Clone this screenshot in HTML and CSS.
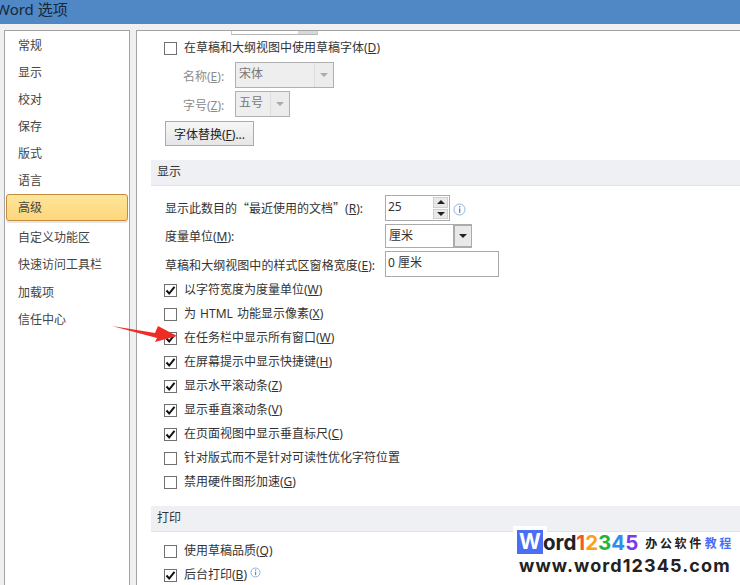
FILE: index.html
```html
<!DOCTYPE html>
<html lang="zh-CN">
<head>
<meta charset="utf-8">
<title>Word 选项</title>
<link rel="stylesheet" href="styles.css">
</head>
<body>
<div class="window">
  <header class="titlebar"><span class="title">Word 选项</span></header>
  <div class="main">
    <nav class="nav">
      <div class="nav-item">常规</div>
      <div class="nav-item">显示</div>
      <div class="nav-item">校对</div>
      <div class="nav-item">保存</div>
      <div class="nav-item">版式</div>
      <div class="nav-item">语言</div>
      <div class="nav-item selected">高级</div>
      <div class="nav-item">自定义功能区</div>
      <div class="nav-item gap-after">快速访问工具栏</div>
      <div class="nav-item">加载项</div>
      <div class="nav-item">信任中心</div>
    </nav>
    <section class="panel">
      <div class="clipped"><span class="clipped-btn"></span></div>
      <label class="check first"><span class="box"></span><span>在草稿和大纲视图中使用草稿字体(<u>D</u>)</span></label>
      <div class="font-row name-row">
        <span class="dim-label">名称(<u>E</u>):</span>
        <span class="combo disabled w-name"><span class="combo-text">宋体</span><span class="combo-btn"><i class="tri"></i></span></span>
      </div>
      <div class="font-row size-row">
        <span class="dim-label">字号(<u>Z</u>):</span>
        <span class="combo disabled w-size"><span class="combo-text">五号</span><span class="combo-btn"><i class="tri"></i></span></span>
      </div>
      <button class="button">字体替换(<u>F</u>)...</button>

      <h2 class="section display">显示</h2>
      <div class="form-row r-recent">
        <span class="form-label">显示此数目的<span class="quote">“</span>最近使用的文档<span class="quote">”</span>(<u>R</u>):</span>
        <span class="spin"><span class="spin-text">25</span><span class="spin-btns"><span class="spin-btn"><i class="tri up"></i></span><span class="spin-btn"><i class="tri"></i></span></span></span>
        <svg class="info" width="13" height="13" viewBox="0 0 13 13"><circle cx="6.5" cy="6.5" r="5.5" fill="#fff" stroke="#8fb4dc"/><rect x="6" y="3" width="1.4" height="1.4" fill="#5b8fc9"/><rect x="6" y="5.4" width="1.4" height="4.4" fill="#5b8fc9"/></svg>
      </div>
      <div class="form-row r-unit">
        <span class="form-label">度量单位(<u>M</u>):</span>
        <span class="combo active w-unit"><span class="combo-text">厘米</span><span class="combo-btn"><i class="tri"></i></span></span>
      </div>
      <div class="form-row r-width">
        <span class="form-label">草稿和大纲视图中的样式区窗格宽度(<u>E</u>):</span>
        <span class="textbox">0 厘米</span>
      </div>
      <div class="checks">
        <label class="check"><span class="box on"><svg width="11" height="11" viewBox="0 0 11 11"><path d="M1.5 5.5 4.2 8.5 9.5 1.8" fill="none" stroke="#111" stroke-width="2"/></svg></span><span>以字符宽度为度量单位(<u>W</u>)</span></label>
        <label class="check"><span class="box"></span><span class="wide">为 HTML 功能显示像素(<u>X</u>)</span></label>
        <label class="check"><span class="box on"><svg width="11" height="11" viewBox="0 0 11 11"><path d="M1.5 5.5 4.2 8.5 9.5 1.8" fill="none" stroke="#111" stroke-width="2"/></svg></span><span>在任务栏中显示所有窗口(<u>W</u>)</span></label>
        <label class="check"><span class="box on"><svg width="11" height="11" viewBox="0 0 11 11"><path d="M1.5 5.5 4.2 8.5 9.5 1.8" fill="none" stroke="#111" stroke-width="2"/></svg></span><span>在屏幕提示中显示快捷键(<u>H</u>)</span></label>
        <label class="check"><span class="box on"><svg width="11" height="11" viewBox="0 0 11 11"><path d="M1.5 5.5 4.2 8.5 9.5 1.8" fill="none" stroke="#111" stroke-width="2"/></svg></span><span>显示水平滚动条(<u>Z</u>)</span></label>
        <label class="check"><span class="box on"><svg width="11" height="11" viewBox="0 0 11 11"><path d="M1.5 5.5 4.2 8.5 9.5 1.8" fill="none" stroke="#111" stroke-width="2"/></svg></span><span>显示垂直滚动条(<u>V</u>)</span></label>
        <label class="check"><span class="box on"><svg width="11" height="11" viewBox="0 0 11 11"><path d="M1.5 5.5 4.2 8.5 9.5 1.8" fill="none" stroke="#111" stroke-width="2"/></svg></span><span>在页面视图中显示垂直标尺(<u>C</u>)</span></label>
        <label class="check"><span class="box"></span><span>针对版式而不是针对可读性优化字符位置</span></label>
        <label class="check"><span class="box"></span><span>禁用硬件图形加速(<u>G</u>)</span></label>
      </div>

      <h2 class="section print">打印</h2>
      <div class="checks print-checks">
        <label class="check"><span class="box"></span><span>使用草稿品质(<u>Q</u>)</span></label>
        <label class="check"><span class="box on"><svg width="11" height="11" viewBox="0 0 11 11"><path d="M1.5 5.5 4.2 8.5 9.5 1.8" fill="none" stroke="#111" stroke-width="2"/></svg></span><span>后台打印(<u>B</u>)</span><svg class="info small" width="11" height="11" viewBox="0 0 11 11"><circle cx="5.5" cy="5.5" r="4.5" fill="#fff" stroke="#8fb4dc"/><rect x="5" y="2.5" width="1.2" height="1.2" fill="#5b8fc9"/><rect x="5" y="4.6" width="1.2" height="3.6" fill="#5b8fc9"/></svg></label>
      </div>
    </section>
  </div>
</div>
<svg class="arrow" width="70" height="20" viewBox="0 0 70 20"><polygon points="1,0 44,7 47,0 66,10 44,16 46,12" fill="#ee2c24"/></svg>
<div class="watermark">
  <div class="wm-top"><span class="wm-w">W</span><span class="wm-ord">ord</span><span class="c1">1</span><span class="c2">2</span><span class="c3">3</span><span class="c4">4</span><span class="c5">5</span><span class="wm-cn">办公软件<span class="wm-blue">教程</span></span></div>
  <div class="wm-url">www.word12345.com</div>
</div>
</body>
</html>
```

FILE: styles.css
```css
* { box-sizing: border-box; }
html, body { margin: 0; padding: 0; }
body {
  width: 740px;
  height: 585px;
  overflow: hidden;
  position: relative;
  background: #f0f0f0;
  font-family: "Noto Sans", "Noto Sans CJK SC", sans-serif;
  font-size: 12px;
  color: #3c3c3c;
}
.window { display: flex; flex-direction: column; height: 585px; }
.titlebar {
  height: 24px;
  flex: none;
  background: #4f88c4;
  color: #17263a;
  font-size: 15px;
  line-height: 18px;
  overflow: hidden;
}
.title { display: block; margin-left: -4px; }
.main { flex: 1; display: flex; padding: 6px 0 0 4px; gap: 6px; min-height: 0; }
.nav {
  width: 126px;
  flex: none;
  background: #fff;
  border: 1px solid #a3a3a3;
  border-bottom: 0;
  padding: 1px 1px 0;
}
.nav-item { height: 27px; line-height: 28px; padding-left: 12px; color: #444; }
.gap-after { margin-bottom: 1px; }
.selected {
  height: 27px;
  margin-bottom: 3px;
  background: linear-gradient(#fde69a, #fdd67c);
  border: 1px solid #c58a3a;
  border-radius: 3px;
  padding-left: 11px;
  line-height: 25px;
  box-shadow: 0 2px 0 #e6e6e6;
}
.panel {
  flex: 1;
  min-width: 0;
  background: #fff;
  border: 1px solid #a3a3a3;
  border-right: 0;
  border-bottom: 0;
  padding-left: 27px;
  color: #333;
}
.clipped {
  display: flex;
  justify-content: flex-end;
  width: 87px;
  height: 4px;
  margin-left: 67px;
  border-bottom: 1px solid #b5b5b5;
  border-left: 1px solid #c8c8c8;
  border-right: 1px solid #c8c8c8;
}
.clipped-btn { width: 19px; background: #d8d8d8; }
.check { display: flex; align-items: center; gap: 7px; height: 24px; line-height: 24px; }
.wide { word-spacing: 1px; }
.first { margin-top: 1px; }
.box {
  width: 13px;
  height: 13px;
  flex: none;
  border: 1px solid #707070;
  background: #fff;
  display: flex;
  align-items: center;
  justify-content: center;
}
.font-row { display: flex; align-items: center; padding-left: 19px; height: 26px; }
.name-row { margin-top: 2px; }
.size-row { margin-top: 3px; }
.dim-label { width: 52px; color: #8c8c8c; padding-top: 1px; }
.combo { display: flex; height: 26px; border: 1px solid #ababab; background: #fff; }
.combo-text { flex: 1; padding-left: 3px; line-height: 22px; }
.combo-btn { display: flex; align-items: center; justify-content: center; }
.disabled { background: #eeeeee; border-color: #b0b0b0; color: #777; }
.disabled .combo-btn { width: 19px; border-left: 1px solid #dcdcdc; background: #ececec; }
.disabled .tri { border-top-color: #aaa; }
.w-name { width: 99px; }
.w-size { width: 55px; }
.tri {
  display: block;
  width: 0;
  height: 0;
  border-left: 4px solid transparent;
  border-right: 4px solid transparent;
  border-top: 4px solid #222;
}
.tri.up { border-top: 0; border-bottom: 4px solid #222; }
.button {
  display: block;
  width: 89px;
  height: 25px;
  margin: 4px 0 0 1px;
  padding: 0;
  border: 1px solid #ababab;
  background: linear-gradient(#f6f6f6, #e6e6e6);
  font: inherit;
  color: #222;
}
.section {
  height: 26px;
  margin: 0 0 0 -13px;
  padding-left: 6px;
  font-size: 12px;
  font-weight: 400;
  line-height: 24px;
  background: #eff0f4;
  border-bottom: 1px solid #e1e3e7;
  color: #333;
}
.display { margin-top: 14px; }
.print { margin-top: 12px; }
.form-row { display: flex; align-items: center; padding-left: 1px; }
.form-label { width: 220px; flex: none; }
.quote { font-family: "Noto Sans CJK SC", sans-serif; }
.r-recent { height: 26px; margin-top: 9px; }
.r-unit { height: 24px; margin-top: 3px; }
.r-width { height: 26px; margin-top: 3px; }
.r-width .form-label { padding-top: 2px; letter-spacing: 0.05px; }
.spin { display: flex; width: 65px; height: 26px; border: 1px solid #ababab; }
.spin-text { flex: 1; padding-left: 2px; line-height: 22px; }
.spin-btns { width: 17px; display: flex; flex-direction: column; padding: 1px; gap: 1px; }
.spin-btn {
  flex: 1;
  display: flex;
  align-items: center;
  justify-content: center;
  background: #e8e8e8;
  border: 1px solid #d0d0d0;
}
.info { margin-left: 3px; margin-top: 3px; flex: none; }
.info.small { margin: 0 0 6px -4px; }
.w-unit { width: 87px; height: 24px; }
.active .combo-btn { width: 19px; background: #e9e9e9; border: 2px solid #ababab; border-right-width: 1px; margin: -1px -1px -1px 0; }
.active .combo-text { line-height: 22px; padding-left: 3px; }
.textbox { width: 114px; height: 26px; border: 1px solid #ababab; padding-left: 2px; line-height: 22px; }
.checks { margin-top: 1px; }
.print-checks { margin-top: 7px; }
.arrow { position: absolute; left: 111px; top: 326px; }
.watermark {
  position: absolute;
  left: 512px;
  top: 525px;
  width: 228px;
  height: 60px;
  background: linear-gradient(transparent 7px, #fff 7px);
  font-family: "Inter", "Noto Sans", sans-serif;
  font-weight: 700;
  color: #222;
}
.wm-top { display: flex; align-items: center; height: 24px; margin: 5px 0 0 5px; font-size: 20.5px; }
.wm-w {
  width: 26px;
  height: 24px;
  background: #4a6ff5;
  color: #fff;
  text-align: center;
  line-height: 24px;
  font-size: 21px;
  box-shadow: 0 0 0 4px #fff;
}
.c1 { color: #f15a24; }
.c2 { color: #f9a11b; }
.c3 { color: #1fb53a; }
.c4 { color: #2d8cf0; }
.c5 { color: #7c3aed; }
.wm-cn {
  margin-left: 7px;
  font-family: "Noto Sans CJK SC", sans-serif;
  font-size: 12px;
  font-weight: 700;
  letter-spacing: 2.6px;
  white-space: nowrap;
}
.wm-blue { color: #4a6ff5; margin-left: 1px; }
.wm-url { margin: 1px 0 0 7px; font-size: 18px; line-height: 22px; letter-spacing: 1.1px; white-space: nowrap; }
```
